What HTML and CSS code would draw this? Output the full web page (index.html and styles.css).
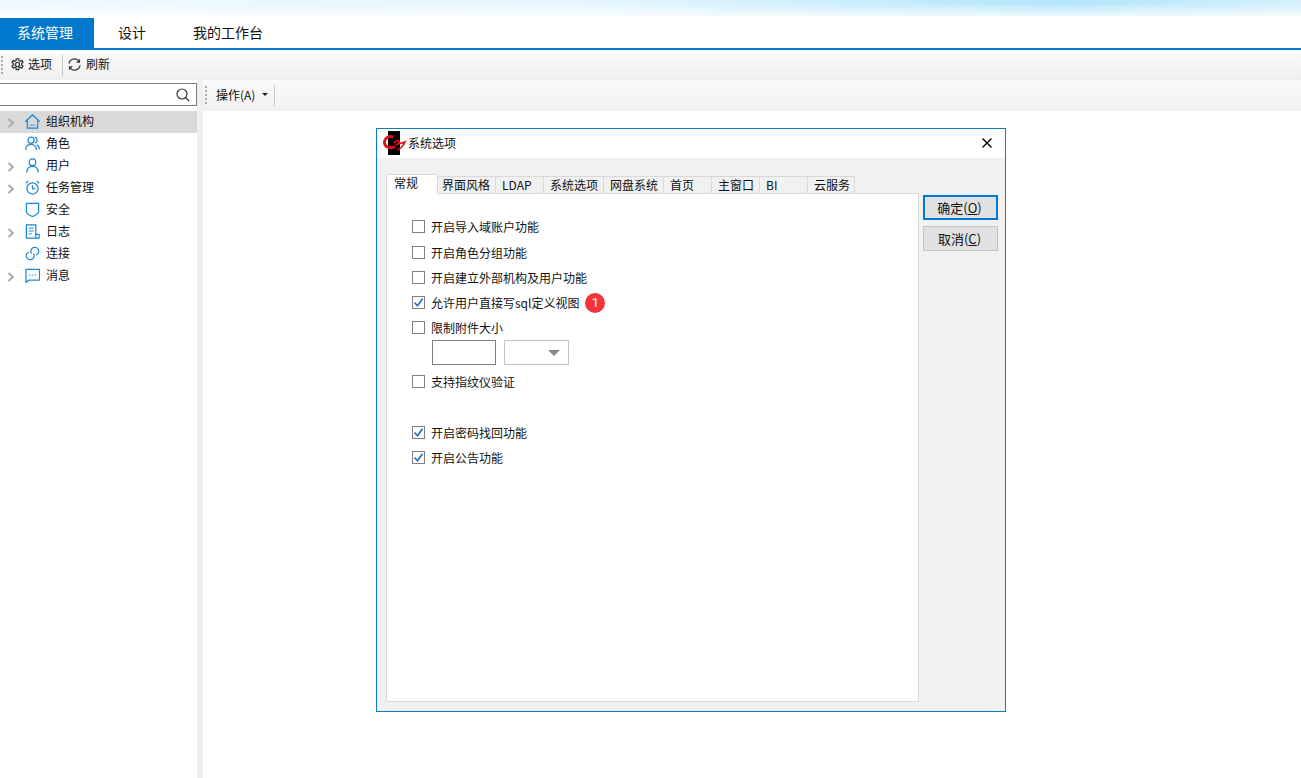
FILE: index.html
```html
<!DOCTYPE html>
<html lang="zh-CN">
<head>
  <meta charset="UTF-8" />
  <title>系统选项</title>
  <link rel="stylesheet" href="styles.css">
</head>
<body>

  <div class="banner"></div>

  <nav class="main-tabs">
    <a class="main-tab active">系统管理</a>
    <a class="main-tab tab-design">设计</a>
    <a class="main-tab tab-work">我的工作台</a>
  </nav>

  <div class="toolbar">
    <span class="grip"></span>
    <span class="tool">
      <svg class="tool-icon" viewBox="0.6 0.1 12.8 12.8"><path d="M5.8 1h2.400l.3 1.700 1.200.6 1.500-.9 1.200 2-1.300 1.100v1.400l1.300 1.100-1.200 2-1.500-.9-1.200.6-.3 1.800H5.800l-.3-1.800-1.200-.6-1.500.9-1.200-2 1.300-1.100V5.500L1.600 4.400l1.200-2 1.500.9 1.200-.6z"/><circle cx="7" cy="6.500" r="2.100"/></svg>
      选项
    </span>
    <span class="tool-sep"></span>
    <span class="tool refresh">
      <svg class="tool-icon" viewBox="0 0 14 14"><path d="M1 6A6 6 0 0 1 11.600 3.200"/><path d="M13 8A6 6 0 0 1 2.400 10.800"/><path class="solid" d="M13 .8v4.400H8.600z"/><path class="solid" d="M1 13.200V8.800h4.400z"/></svg>
      刷新
    </span>
  </div>

  <div class="workspace">
    <aside class="sidebar">
      <div class="search-wrap">
        <div class="search-box">
          <svg class="search-icon" viewBox="0 0 14 14"><circle cx="6" cy="6" r="5"/><path d="M9.700 9.700L13 13"/></svg>
        </div>
      </div>
      <ul class="tree">
        <li class="tree-row selected">
          <svg class="arrow" viewBox="0 0 8 10"><path d="M1.500 1l4.500 4-4.500 4"/></svg>
          <svg class="tree-icon" viewBox="0 0 16 16"><path d="M1 7.500L8 1l7 6.500h-1.500V15h-11V7.500z"/><path class="thick" d="M5 12h6"/></svg>
          组织机构
        </li>
        <li class="tree-row">
          <span class="arrow"></span>
          <svg class="tree-icon" viewBox="0 0 16 16"><circle cx="6.500" cy="4.500" r="3.300"/><path d="M.8 15c0-4 2.400-6 5.700-6s5.700 2 5.700 6"/><path d="M10.500 1.300c2.600.3 3.500 5 .3 6.300"/><path d="M12.500 9.300c1.800.8 2.800 3 2.800 5.200"/></svg>
          角色
        </li>
        <li class="tree-row">
          <svg class="arrow" viewBox="0 0 8 10"><path d="M1.500 1l4.500 4-4.500 4"/></svg>
          <svg class="tree-icon" viewBox="0 0 16 16"><circle cx="8" cy="4.500" r="3.500"/><path d="M2 15.500c0-4 2.500-6.500 6-6.500s6 2.500 6 6.500"/></svg>
          用户
        </li>
        <li class="tree-row">
          <svg class="arrow" viewBox="0 0 8 10"><path d="M1.500 1l4.500 4-4.500 4"/></svg>
          <svg class="tree-icon" viewBox="0 0 16 16"><circle cx="8" cy="9" r="6"/><path d="M8 5.500V9.500h3"/><path d="M1 3.500L3.500 1M15 3.500L12.500 1"/></svg>
          任务管理
        </li>
        <li class="tree-row">
          <span class="arrow"></span>
          <svg class="tree-icon" viewBox="0 0 16 16"><path d="M1.500 1.500h13V10c0 2-3 4-6.500 5.500C4.500 14 1.500 12 1.500 10z"/></svg>
          安全
        </li>
        <li class="tree-row">
          <svg class="arrow" viewBox="0 0 8 10"><path d="M1.500 1l4.500 4-4.500 4"/></svg>
          <svg class="tree-icon" viewBox="0 0 16 16"><path d="M11.500 15H1.500V1h10v14"/><path class="thick" d="M3.800 4.500h5.500M3.800 7.500h5.500M3.800 10.500h3.500"/><path d="M11.500 11h3.500v4h-3.500"/></svg>
          日志
        </li>
        <li class="tree-row">
          <span class="arrow"></span>
          <svg class="tree-icon" viewBox="0 0 16 16"><path d="M7 8A4.200 4.200 0 1 1 11.700 9.600"/><path d="M9 8A4.200 4.200 0 1 1 4.300 6.400"/></svg>
          连接
        </li>
        <li class="tree-row">
          <svg class="arrow" viewBox="0 0 8 10"><path d="M1.500 1l4.500 4-4.500 4"/></svg>
          <svg class="tree-icon" viewBox="0 0 16 16"><path d="M1 1.500h14.500V13H4l-3 2.500z"/><path class="thick" d="M4.500 7.500h1.500M7.500 7.500h1.500M10.500 7.500h1.500"/></svg>
          消息
        </li>
      </ul>
    </aside>

    <div class="splitter"></div>

    <main class="content">
      <div class="action-bar">
        <span class="grip"></span>
        <span class="action">操作(A)</span>
        <span class="caret"></span>
        <span class="tool-sep"></span>
      </div>
    </main>
  </div>

  <!-- 系统选项 dialog -->
  <div class="dialog">
    <div class="dialog-title">
      <svg class="logo" viewBox="0 0 24 26">
        <rect x="5" y="2" width="12" height="24" fill="#000"/>
        <path d="M10.500 8C5.500 6 1 9.500 1.500 14c.5 4.500 6.500 6 10.500 3.500" fill="none" stroke="#e3101c" stroke-width="2.800"/>
        <path d="M11 14c1.500-2.500 4.500-3 5-1.300.5 1.600-2 3.300-3.800 2.800M15.500 14.500c2.200 0 4.800-.7 6.500-1.500-1 2.500-3.500 6-7.500 8" fill="none" stroke="#e3101c" stroke-width="1.700"/>
      </svg>
      <span class="dialog-name">系统选项</span>
      <svg class="close" viewBox="0 0 10 10"><path d="M.5.500l9 9M9.500.500l-9 9"/></svg>
    </div>

    <div class="dialog-body">
      <div class="dialog-main">
        <div class="tabs">
          <span class="tab current">常规</span>
          <span class="tab w58">界面风格</span>
          <span class="tab w48">LDAP</span>
          <span class="tab w60">系统选项</span>
          <span class="tab w60">网盘系统</span>
          <span class="tab w48">首页</span>
          <span class="tab w48">主窗口</span>
          <span class="tab w48">BI</span>
          <span class="tab w47">云服务</span>
        </div>
        <div class="panel">
          <label class="opt h26"><span class="check"></span>开启导入域账户功能</label>
          <label class="opt h26"><span class="check"></span>开启角色分组功能</label>
          <label class="opt"><span class="check"></span>开启建立外部机构及用户功能</label>
          <label class="opt">
            <span class="check"><svg viewBox="0 0 11 11"><path d="M1.500 5.500l3 3.200 5-7"/></svg></span>
            允许用户直接写sql定义视图
            <span class="badge">1</span>
          </label>
          <label class="opt h24"><span class="check"></span>限制附件大小</label>
          <div class="size-row">
            <span class="size-input"></span>
            <span class="size-select"><i class="select-arrow"></i></span>
          </div>
          <label class="opt"><span class="check"></span>支持指纹仪验证</label>
          <label class="opt gap-top">
            <span class="check"><svg viewBox="0 0 11 11"><path d="M1.500 5.500l3 3.200 5-7"/></svg></span>
            开启密码找回功能
          </label>
          <label class="opt">
            <span class="check"><svg viewBox="0 0 11 11"><path d="M1.500 5.500l3 3.200 5-7"/></svg></span>
            开启公告功能
          </label>
        </div>
      </div>

      <div class="dialog-buttons">
        <button class="btn primary" type="button">确定(<u>O</u>)</button>
        <button class="btn" type="button">取消(<u>C</u>)</button>
      </div>
    </div>
  </div>

</body>
</html>
```

FILE: styles.css
```css
* {
  box-sizing: border-box;
}

html, body {
  height: 100%;
}

body {
  margin: 0;
  height: 778px;
  overflow: hidden;
  position: relative;
  display: flex;
  flex-direction: column;
  background-color: #fff;
  color: #111;
  font-family: "Noto Sans CJK SC", "Noto Sans", sans-serif;
  font-size: 12px;
}

/* top strip */
.banner {
  height: 16px;
  flex: none;
  background:
    linear-gradient(to bottom, rgba(255,255,255,0) 20%, rgba(255,255,255,0.75) 100%),
    linear-gradient(to right, #eef9fe 0%, #e6f6fe 45%, #b4e5fb 82%, #d4f0fc 100%);
}

.main-tabs {
  height: 34px;
  flex: none;
  padding-top: 2px;
  display: flex;
  background-color: #fff;
  border-bottom: 2px solid #0078cc;
}

.main-tab {
  font-size: 14px;
  line-height: 29px;
  text-align: center;
  color: #111;
}

.main-tab.active {
  width: 94px;
  padding-right: 4px;
  color: #fff;
  background-color: #0078cc;
}

.tab-design {
  width: 76px;
}

.tab-work {
  width: 110px;
  margin-left: 3px;
}

.toolbar {
  height: 30px;
  flex: none;
  display: flex;
  align-items: center;
  padding-bottom: 3px;
  background: linear-gradient(to bottom, #fbfbfb, #efefef);
}

.grip {
  width: 2px;
  height: 18px;
  margin-left: 1px;
  background: repeating-linear-gradient(to bottom, #aaa 0, #aaa 2px, transparent 2px, transparent 4px);
}

.toolbar .grip,
.toolbar .tool-sep {
  margin-top: 3px;
}

.tool {
  display: flex;
  align-items: center;
  gap: 4px;
  margin-left: 8px;
}

.tool.refresh {
  gap: 5px;
  margin-left: 5px;
}

.tool-icon {
  width: 13px;
  height: 13px;
  margin-top: 1px;
  fill: none;
  stroke: #3a3a3a;
  stroke-width: 1.300;
}

.tool-icon .solid {
  fill: #3a3a3a;
  stroke: none;
}

.tool-sep {
  width: 1px;
  height: 21px;
  margin-left: 10px;
  background-color: #c8c8c8;
}

.workspace {
  flex: 1;
  display: flex;
  min-height: 0;
}

.sidebar {
  width: 197px;
  flex: none;
}

.search-wrap {
  height: 31px;
  padding-top: 3px;
}

.search-box {
  height: 23px;
  margin-left: -2px;
  display: flex;
  align-items: center;
  justify-content: flex-end;
  padding-right: 6px;
  background-color: #fff;
  border: 1px solid #7a7a7a;
}

.search-icon {
  width: 14px;
  height: 14px;
  fill: none;
  stroke: #333;
  stroke-width: 1.200;
}

.tree {
  list-style: none;
  margin: 0;
  padding: 0;
}

.tree-row {
  height: 22px;
  display: flex;
  align-items: center;
  padding-left: 7px;
  padding-bottom: 3px;
  color: #111;
}

.tree-row.selected {
  background-color: #d9d9d9;
}

.arrow {
  width: 8px;
  height: 10px;
  flex: none;
  margin-top: 5px;
  fill: none;
  stroke: #a8a8a8;
  stroke-width: 1.800;
}

.tree-icon {
  width: 15px;
  height: 15px;
  flex: none;
  margin: 1px 6px 0 10px;
  fill: none;
  stroke: #1c86d6;
  stroke-width: 1.300;
}

.tree-icon .thick {
  stroke: #6db2e6;
  stroke-width: 1.600;
}

.splitter {
  width: 6px;
  flex: none;
  background-color: #f0f0f0;
}

.content {
  flex: 1;
  background-color: #fff;
}

.action-bar {
  height: 31px;
  display: flex;
  align-items: center;
  padding-bottom: 3px;
  background: linear-gradient(to bottom, #fafafa, #f1f1f1);
}

.action-bar .grip {
  margin: 2px 0 0 2px;
}

.action {
  margin-left: 9px;
}

.caret {
  width: 0;
  height: 0;
  margin-left: 7px;
  border-style: solid;
  border-width: 3px 3px 0;
  border-color: #222 transparent transparent;
}

.action-bar .tool-sep {
  margin: 2px 0 0 6px;
}

/* dialog floats over the workspace */
.dialog {
  position: absolute;
  left: 376px;
  top: 128px;
  width: 630px;
  height: 584px;
  display: flex;
  flex-direction: column;
  background-color: #f1f1f1;
  border: 1px solid #0a7cc8;
}

.dialog-title {
  height: 29px;
  flex: none;
  display: flex;
  align-items: center;
  background-color: #fff;
  padding: 0 0 3px 6px;
}

.logo {
  width: 24px;
  height: 26px;
  flex: none;
}

.dialog-name {
  margin-left: 1px;
  flex: 1;
}

.close {
  width: 10px;
  height: 10px;
  margin-right: 13px;
  margin-top: 2px;
  fill: none;
  stroke: #000;
  stroke-width: 1.400;
}

.dialog-body {
  flex: 1;
  display: flex;
  padding: 16px 7px 9px 9px;
  gap: 4px;
}

.dialog-main {
  width: 533px;
  display: flex;
  flex-direction: column;
}

.tabs {
  height: 20px;
  flex: none;
  display: flex;
  align-items: flex-end;
  position: relative;
  z-index: 1;
}

.tab {
  height: 18px;
  line-height: 15px;
  padding-left: 5px;
  white-space: nowrap;
  background-color: #f1f1f1;
  border: 1px solid #d9d9d9;
  border-left: none;
}

.tab.current {
  width: 52px;
  height: 20px;
  padding-left: 7px;
  line-height: 16px;
  background-color: #fff;
  border-left: 1px solid #d9d9d9;
  border-bottom: none;
}

.w58 { width: 58px; padding-left: 4px; }
.w48 { width: 48px; padding-left: 6px; }
.w60 { width: 60px; padding-left: 6px; }
.w47 { width: 47px; padding-left: 6px; }

.panel {
  flex: 1;
  margin-top: -1px;
  padding: 19px 0 0 25px;
  background-color: #fff;
  border: 1px solid #d9d9d9;
}

.opt {
  height: 25px;
  display: flex;
  align-items: center;
}

.opt.h26 {
  height: 26px;
}

.opt.h24 {
  height: 24px;
}

.opt.gap-top {
  margin-top: 26px;
}

.check {
  width: 13px;
  height: 13px;
  flex: none;
  margin-right: 6px;
  background-color: #fff;
  border: 1px solid #7f7f7f;
}

.check svg {
  display: block;
  width: 11px;
  height: 11px;
  fill: none;
  stroke: #1a6fc0;
  stroke-width: 1.600;
}

.badge {
  width: 20px;
  height: 20px;
  margin-left: 6px;
  border-radius: 50%;
  background-color: #f5333a;
  color: #fff;
  font-family: Roboto, sans-serif;
  font-size: 13px;
  line-height: 20px;
  text-align: center;
}

.size-row {
  height: 25px;
  margin-top: 1px;
  margin-bottom: 4px;
  padding-left: 20px;
  display: flex;
  gap: 8px;
}

.size-input {
  width: 64px;
  background-color: #fff;
  border: 1px solid #7f7f7f;
}

.size-select {
  width: 65px;
  display: flex;
  align-items: center;
  justify-content: flex-end;
  padding-right: 8px;
  background-color: #fff;
  border: 1px solid #c4c4c4;
}

.select-arrow {
  width: 0;
  height: 0;
  border-style: solid;
  border-width: 6px 6px 0;
  border-color: #8a8a8a transparent transparent;
}

.dialog-buttons {
  display: flex;
  flex-direction: column;
  gap: 6px;
  padding-top: 21px;
}

.btn {
  width: 75px;
  height: 25px;
  padding: 0 2px 0 0;
  font: inherit;
  font-size: 13px;
  color: #111;
  background-color: #e1e1e1;
  border: 1px solid #c4c4c4;
}

.btn.primary {
  border: 2px solid #0078d7;
}
```
